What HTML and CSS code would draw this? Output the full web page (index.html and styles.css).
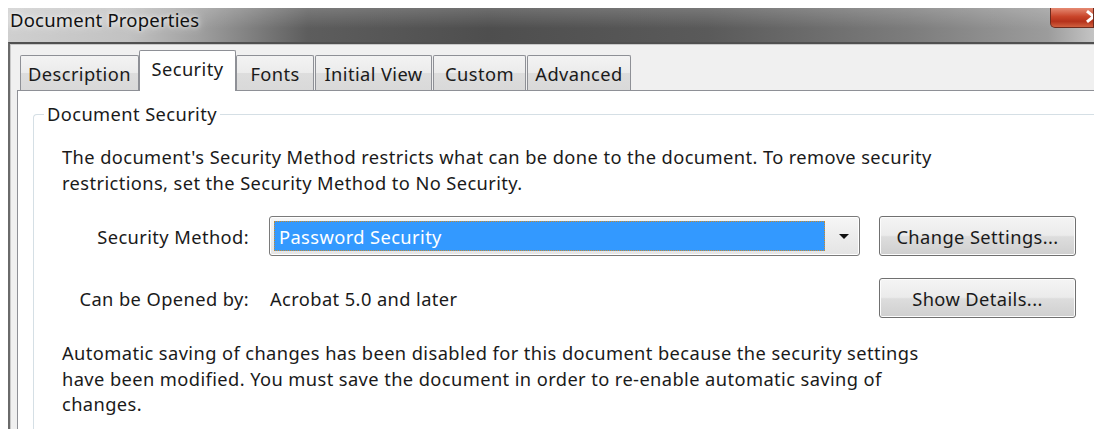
FILE: index.html
```html
<!DOCTYPE html>
<html lang="en">
<head>
<meta charset="utf-8">
<title>Document Properties</title>
<link rel="stylesheet" href="styles.css">
</head>
<body>
<div class="window">
  <div class="titlebar">
    <span class="title">Document Properties</span>
    <span class="close"><span class="close-x"></span></span>
  </div>
  <div class="frame">
    <div class="tabs">
      <div class="tab tab-description">Description</div>
      <div class="tab tab-security active">Security</div>
      <div class="tab tab-fonts">Fonts</div>
      <div class="tab tab-view">Initial View</div>
      <div class="tab tab-custom">Custom</div>
      <div class="tab tab-advanced">Advanced</div>
    </div>
    <div class="panel">
      <fieldset class="group">
        <legend>Document Security</legend>
        <p class="para">The document's Security Method restricts what can be done to the document. To remove security<br>restrictions, set the Security Method to No Security.</p>
        <div class="form">
          <span class="label">Security Method:</span>
          <div class="select">
            <span class="select-value">Password Security</span>
            <span class="arrow"></span>
          </div>
          <button class="btn">Change Settings...</button>
          <span class="label">Can be Opened by:</span>
          <span class="value">Acrobat 5.0 and later</span>
          <button class="btn">Show Details...</button>
        </div>
        <p class="para">Automatic saving of changes has been disabled for this document because the security settings<br>have been modified. You must save the document in order to re-enable automatic saving of<br>changes.</p>
      </fieldset>
    </div>
  </div>
</div>
</body>
</html>
```

FILE: styles.css
```css
html, body {
  margin: 0;
  background: #ffffff;
}
body {
  padding: 8px 0 0 8px;
  height: 429px;
  box-sizing: border-box;
  overflow: hidden;
  font-family: "Noto Sans", "Open Sans", sans-serif;
  font-size: 18.3px;
  letter-spacing: 0.4px;
  color: #1a1a1a;
}

.window {
  display: flex;
  flex-direction: column;
  height: 100%;
}

/* glassy caption bar */
.titlebar {
  height: 34px;
  flex: none;
  display: flex;
  align-items: flex-start;
  background:
    linear-gradient(to bottom, rgba(255,255,255,0.18), rgba(255,255,255,0) 60%),
    linear-gradient(to right, #cfcfcf 0, #c2c2c2 120px, #a0a0a0 190px, #5d5d5d 300px, #4e4e4e 480px, #5a5a5a 700px, #7c7c7c 900px, #9c9c9c 1040px, #c4c4c4 1086px);
}
.title {
  padding: 1px 0 0 2px;
  font-size: 18.5px;
  letter-spacing: 0.2px;
  line-height: 22px;
  color: #111;
  text-shadow: 0 0 10px rgba(255,255,255,0.9), 0 0 4px rgba(255,255,255,0.8);
}
.close {
  margin-left: auto;
  width: 44px;
  height: 20px;
  box-sizing: border-box;
  border: 1px solid #6d2b1e;
  border-top: none;
  border-radius: 0 0 0 5px;
  background: linear-gradient(to bottom, #e58a73 0, #c9452a 45%, #b5321b 70%, #d0603f 100%);
  overflow: hidden;
  position: relative;
}
/* the white cross, only its left half shows at the edge */
.close-x {
  position: absolute;
  right: -8px;
  top: 1px;
  width: 16px;
  height: 14px;
}
.close-x::before,
.close-x::after {
  content: "";
  position: absolute;
  left: 0;
  top: 6px;
  width: 17px;
  height: 3px;
  background: #ffffff;
  transform: rotate(40deg);
}
.close-x::after {
  transform: rotate(-40deg);
}

/* dialog body */
.frame {
  flex: 1;
  display: flex;
  flex-direction: column;
  background: #f0f0f0;
  border-top: 2px solid #505050;
  border-left: 2px solid #6a6a6a;
  box-shadow: inset 0 1px 0 #c8c8c8, inset 1px 0 0 #c8c8c8;
  padding: 10px 0 0 7px;
}

.tabs {
  display: flex;
  align-items: flex-end;
  padding-left: 3px;
  position: relative;
  z-index: 1;
  height: 36px;
  flex: none;
}
.tab {
  height: 35px;
  box-sizing: border-box;
  padding: 2px 0 0;
  display: flex;
  align-items: center;
  justify-content: center;
  border: 1px solid #8e9096;
  border-bottom: none;
  border-radius: 2px 2px 0 0;
  background: linear-gradient(to bottom, #f3f3f3 0, #ebebeb 50%, #dddddd 51%, #d9d9d9 100%);
  line-height: 20px;
}
.tab-description { width: 119px; }
.tab-security    { width: 97px; }
.tab-fonts       { width: 78px; }
.tab-view        { width: 117px; margin-left: 1px; }
.tab-custom      { width: 93px; margin-left: 1px; }
.tab-advanced    { width: 104px; margin-left: 1px; }

.tab.active {
  height: 41px;
  margin-bottom: -1px;
  padding: 0 0 4px;
  background: #ffffff;
  position: relative;
  z-index: 2;
}

.panel {
  flex: 1;
  background: #ffffff;
  border-top: 1px solid #8e9096;
  border-left: 1px solid #8e9096;
  padding: 11px 0 0 15px;
  display: flex;
}

.group {
  flex: 1;
  margin: 0;
  border: 1px solid #d5dfe5;
  border-right: none;
  border-bottom: none;
  border-radius: 4px 0 0 0;
  padding: 18px 0 0 28px;
  min-width: 0;
}
.group legend {
  padding: 0 3px;
  margin-left: -18px;
  line-height: 24px;
}

.para {
  margin: 0;
  white-space: nowrap;
  line-height: 25.5px;
}

.form {
  display: grid;
  grid-template-columns: 187px 591px 196px;
  column-gap: 20px;
  row-gap: 22px;
  align-items: center;
  margin: 21px 0 22px;
}
.form > :nth-child(3n) {
  margin-left: -1px;
}
.label {
  text-align: right;
}
.value {
  padding-left: 1px;
}

.select {
  height: 40px;
  box-sizing: border-box;
  border: 1px solid #7a7a7a;
  border-radius: 3px;
  background: linear-gradient(to bottom, #f6f6f6, #e4e4e4);
  padding: 4px;
  display: flex;
  align-items: stretch;
  box-shadow: inset 0 0 0 1px #ffffff;
}
.select-value {
  flex: 0 0 551px;
  box-sizing: border-box;
  background: #3399ff;
  color: #ffffff;
  border: 1px dotted #c8892a;
  padding-left: 4px;
  display: flex;
  align-items: center;
}
.arrow {
  margin: auto 0 auto 14px;
  width: 0;
  height: 0;
  border-left: 5px solid transparent;
  border-right: 5px solid transparent;
  border-top: 5px solid #111;
}

.btn {
  height: 40px;
  font: inherit;
  letter-spacing: inherit;
  color: #1a1a1a;
  border: 1px solid #707070;
  border-radius: 3px;
  background: linear-gradient(to bottom, #f4f4f4 0, #ebebeb 48%, #dddddd 52%, #cfcfcf 100%);
  box-shadow: inset 0 0 0 1px #fcfcfc;
  padding: 0 6px;
}
```
